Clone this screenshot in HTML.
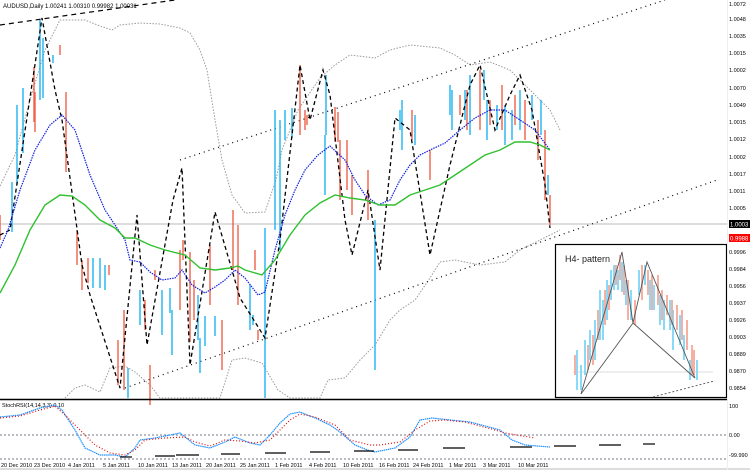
<!DOCTYPE html>
<html><head><meta charset="utf-8"><style>
html,body{margin:0;padding:0;background:#fff;width:750px;height:470px;overflow:hidden}
svg{display:block}
text{font-family:"Liberation Sans",sans-serif}
</style></head><body>
<svg width="750" height="470" viewBox="0 0 750 470" xmlns="http://www.w3.org/2000/svg">
<rect width="750" height="470" fill="#fff"/>
<!-- horizontal price line -->
<line x1="0" y1="224" x2="727" y2="224" stroke="#bbb" stroke-width="1"/>
<!-- bollinger upper -->
<polyline fill="none" stroke="#999" stroke-width="1" stroke-dasharray="1.5,1.5" points="0,186 15,155 30,100 45,50 60,20 85,20 100,26 112,30 120,25 140,23 160,24 180,28 190,33 200,50 207,70 215,120 222,160 232,195 245,213 265,212 276,180 282,150 298,110 320,78 335,65 350,55 375,58 390,50 410,45 440,48 455,55 470,65 490,62 510,70 530,90 550,110 560,130"/>
<!-- bollinger lower -->
<polyline fill="none" stroke="#999" stroke-width="1" stroke-dasharray="1.5,1.5" points="65,398 75,388 85,385 100,392 110,368 125,366 135,372 150,385 160,398 220,398 232,360 245,358 262,363 278,390 290,398 320,398 328,380 345,378 360,360 375,345 390,320 400,310 415,300 430,278 440,262 455,260 480,265 505,262 520,250 540,240 560,230"/>
<!-- top dashed line -->
<line x1="0" y1="25" x2="175" y2="0" stroke="#000" stroke-width="1.2" stroke-dasharray="5,4"/>
<!-- upper channel dotted -->
<line x1="180" y1="160" x2="665" y2="0" stroke="#000" stroke-width="1.2" stroke-dasharray="1,4"/>
<!-- lower channel dotted -->
<line x1="125" y1="388" x2="717" y2="180" stroke="#000" stroke-width="1.2" stroke-dasharray="1,4"/>
<!-- candles cyan -->
<g stroke="#1eb4f0" stroke-width="1.4" fill="none">
<path d="M12 182v50M17 105v80M23 88v65M40 20v80M43 38v60M53 55v8M93 258v30M100 258v30M105 265v25M128 368v30M140 290v35M162 290v45M170 288v25M172 310v45M198 295v45M200 338v35M205 316v30M215 316v20M250 285v45M253 315v10M265 228v170M275 110v120M280 120v130M285 110v30M292 108v30M326 75v60M325 135v60M375 220v150M400 110v20M402 100v50M415 115v30M450 85v30M452 90v40M465 90v30M470 75v60M484 70v30M487 100v40M497 105v25M505 105v40M512 110v30M520 90v40M532 95v25M541 100v35M548 175v20"/>
</g>
<!-- candles red -->
<g stroke="#f0604a" stroke-width="1.4" fill="none">
<path d="M0 215v25M34 67v55M35 92v40M60 45v10M66 92v80M77 230v35M82 260v30M88 258v25M109 265v10M118 340v45M124 310v80M145 300v30M155 270v10M150 365v40M180 250v60M183 240v20M190 252v90M194 280v40M210 245v60M222 320v50M233 210v60M238 225v80M255 250v20M258 330v10M300 65v70M305 110v20M307 115v10M335 107v35M338 112v30M340 140v60M347 140v50M352 175v40M368 170v50M412 110v30M430 150v30M460 95v20M467 90v40M480 70v60M490 100v25M502 85v45M515 95v30M525 100v40M538 120v40M545 130v70M550 195v30"/>
</g>
<!-- zigzag dashed -->
<polyline fill="none" stroke="#000" stroke-width="1.3" stroke-dasharray="4,3" points="0,235 10,230 42,18 55,90 62,120 82,265 90,295 120,388 137,215 147,345 173,200 182,168 190,365 215,212 232,270 240,298 265,338 280,240 300,65 310,120 323,70 330,95 345,220 352,255 368,190 380,270 395,118 410,130 430,255 450,165 470,85 480,65 495,130 510,95 520,75 532,110 545,185 550,228"/>
<!-- blue MA -->
<polyline fill="none" stroke="#1020e0" stroke-width="1.2" stroke-dasharray="1.5,1" points="0,248 8,230 20,190 35,150 50,125 62,115 75,130 90,175 105,210 115,225 125,240 130,260 140,262 150,272 162,280 175,278 182,270 192,285 205,293 215,287 225,280 235,270 245,278 258,295 265,292 275,250 285,215 295,190 305,170 318,155 330,146 345,160 355,180 365,195 378,205 390,200 400,180 410,165 420,155 430,150 445,143 460,130 475,118 490,110 505,110 520,120 535,130 550,150"/>
<!-- green MA -->
<polyline fill="none" stroke="#30c030" stroke-width="1.4" points="0,293 15,265 30,230 45,205 60,195 72,196 85,205 100,220 115,228 125,238 135,238 150,245 165,250 185,255 200,268 215,270 230,268 238,266 245,270 262,275 275,260 290,235 305,215 320,203 335,195 350,198 365,200 380,205 395,205 410,195 425,190 440,185 455,175 470,165 485,155 500,150 515,142 530,142 540,145 550,150"/>
<!-- header label -->
<text x="3" y="8" font-size="6" fill="#000">AUDUSD,Daily  1.00241 1.00310 0.99982 1.00031</text>
<!-- inset -->
<rect x="555.5" y="244.5" width="171" height="153" fill="#fff" stroke="#000" stroke-width="1.2"/>
<line x1="573" y1="372" x2="713" y2="372" stroke="#ddd"/>
<g stroke="#7dd6f8" stroke-width="2" opacity="0.9">
<path d="M577 350v40M581 365v25M585 340v35M590 330v30M595 320v40M600 290v50M603 300v40M607 280v40M611 270v30M614 265v25M618 270v20M622 262v30M626 280v25M631 290v30M639 270v25M645 265v20M650 280v30M654 285v25M660 295v30M664 300v30M670 300v30M673 310v40M680 315v30M684 335v25M690 360v20M697 360v20"/>
</g>
<g stroke="#f5a898" stroke-width="2" opacity="0.9">
<path d="M575 355v20M588 345v25M593 335v30M598 310v30M605 290v35M609 285v25M616 265v20M620 255v25M624 265v30M628 280v40M635 300v25M642 265v35M648 270v25M652 275v35M658 275v30M662 290v30M667 295v20M672 300v25M677 305v25M682 310v30M687 320v30M692 345v30M694 350v25"/>
</g>
<polyline fill="none" stroke="#555" stroke-width="0.9" points="581,394 622,252 633,323 647,262 695,378"/>
<polyline fill="none" stroke="#555" stroke-width="0.9" points="581,394 633,323 695,378"/>
<line x1="653" y1="397" x2="714" y2="381" stroke="#555" stroke-width="0.9" stroke-dasharray="2,2"/>
<text x="565" y="262" font-size="9" fill="#222">H4- pattern</text>
<!-- right axis -->
<g font-size="5.5" fill="#000">
<text x="729" y="6">1.0072</text><text x="729" y="21">1.0048</text><text x="729" y="38">1.0035</text><text x="729" y="55">1.0015</text><text x="729" y="72">1.0002</text><text x="729" y="90">1.0070</text><text x="729" y="107">1.0049</text><text x="729" y="124">1.0015</text><text x="729" y="141">1.0012</text><text x="729" y="159">1.0002</text><text x="729" y="176">1.0017</text><text x="729" y="193">1.0011</text><text x="729" y="210">1.0005</text>
<text x="729" y="254">0.9996</text><text x="729" y="271">0.9984</text><text x="729" y="288">0.9956</text><text x="729" y="305">0.9937</text><text x="729" y="322">0.9926</text><text x="729" y="339">0.9903</text><text x="729" y="356">0.9889</text><text x="729" y="373">0.9870</text><text x="729" y="390">0.9854</text>
</g>
<rect x="729" y="220" width="21" height="8" fill="#000"/><text x="730" y="226.5" font-size="6" fill="#fff">1.0003</text>
<rect x="729" y="234" width="21" height="8" fill="#f00"/><text x="730" y="240.5" font-size="6" fill="#fff">0.9988</text>
<!-- separator -->
<line x1="0" y1="399.5" x2="727" y2="399.5" stroke="#000" stroke-width="1.5"/>
<!-- indicator -->
<text x="2" y="407" font-size="5.5" fill="#000">StochRSI(14,14,3,3) 0.10</text>
<line x1="0" y1="435" x2="727" y2="435" stroke="#778" stroke-dasharray="2,2"/>
<line x1="0" y1="459" x2="727" y2="459" stroke="#778" stroke-dasharray="2,2"/>
<polyline fill="none" stroke="#1e90ff" stroke-width="1.2" stroke-dasharray="1.5,0.6" points="0,417 20,415 40,408 55,405 62,410 75,430 85,448 100,455 115,455 125,457 135,448 140,440 155,438 170,435 180,433 195,445 210,448 225,442 235,437 250,443 260,445 270,435 280,423 290,414 300,412 315,418 330,425 340,432 355,445 370,451 375,452 395,448 410,437 420,420 432,418 450,420 470,422 500,430 512,440 525,445 550,447"/>
<polyline fill="none" stroke="#e01010" stroke-width="1.2" stroke-dasharray="1,2" points="0,418 20,416 40,410 55,406 65,415 80,430 95,445 110,453 125,455 135,450 145,440 165,438 185,437 195,442 210,446 225,440 240,441 255,443 270,440 280,430 290,420 300,414 315,417 335,425 350,440 370,445 380,445 400,442 415,430 430,421 445,420 465,422 495,430 505,433 535,438"/>
<g stroke="#000" stroke-width="1.2">
<line x1="120" y1="457" x2="132" y2="457"/><line x1="155" y1="456" x2="175" y2="456"/><line x1="176" y1="455" x2="199" y2="455"/><line x1="221" y1="454" x2="240" y2="454"/><line x1="265" y1="453" x2="286" y2="453"/><line x1="310" y1="452" x2="330" y2="452"/><line x1="354" y1="451" x2="374" y2="451"/><line x1="398" y1="450" x2="418" y2="450"/><line x1="443" y1="448" x2="465" y2="448"/><line x1="510" y1="447" x2="532" y2="447"/><line x1="554" y1="446" x2="576" y2="446"/><line x1="599" y1="445" x2="621" y2="445"/><line x1="643" y1="444" x2="655" y2="444"/>
</g>
<g font-size="5.5" fill="#000">
<text x="729" y="408">100</text><text x="729" y="437">0.00</text><text x="729" y="457">-99.990</text>
</g>
<!-- date axis -->
<g font-size="5.5" fill="#000">
<text x="1" y="467">20 Dec 2010</text><text x="34" y="467">23 Dec 2010</text><text x="68" y="467">4 Jan 2011</text><text x="103" y="467">5 Jan 2011</text><text x="138" y="467">10 Jan 2011</text><text x="172" y="467">13 Jan 2011</text><text x="206" y="467">20 Jan 2011</text><text x="240" y="467">25 Jan 2011</text><text x="275" y="467">1 Feb 2011</text><text x="309" y="467">4 Feb 2011</text><text x="343" y="467">10 Feb 2011</text><text x="379" y="467">16 Feb 2011</text><text x="413" y="467">24 Feb 2011</text><text x="449" y="467">1 Mar 2011</text><text x="483" y="467">3 Mar 2011</text><text x="518" y="467">10 Mar 2011</text>
</g>
<rect x="0" y="468" width="750" height="2" fill="#ddd"/>
<line x1="727.5" y1="0" x2="727.5" y2="470" stroke="#eee"/>
</svg>
</body></html>
